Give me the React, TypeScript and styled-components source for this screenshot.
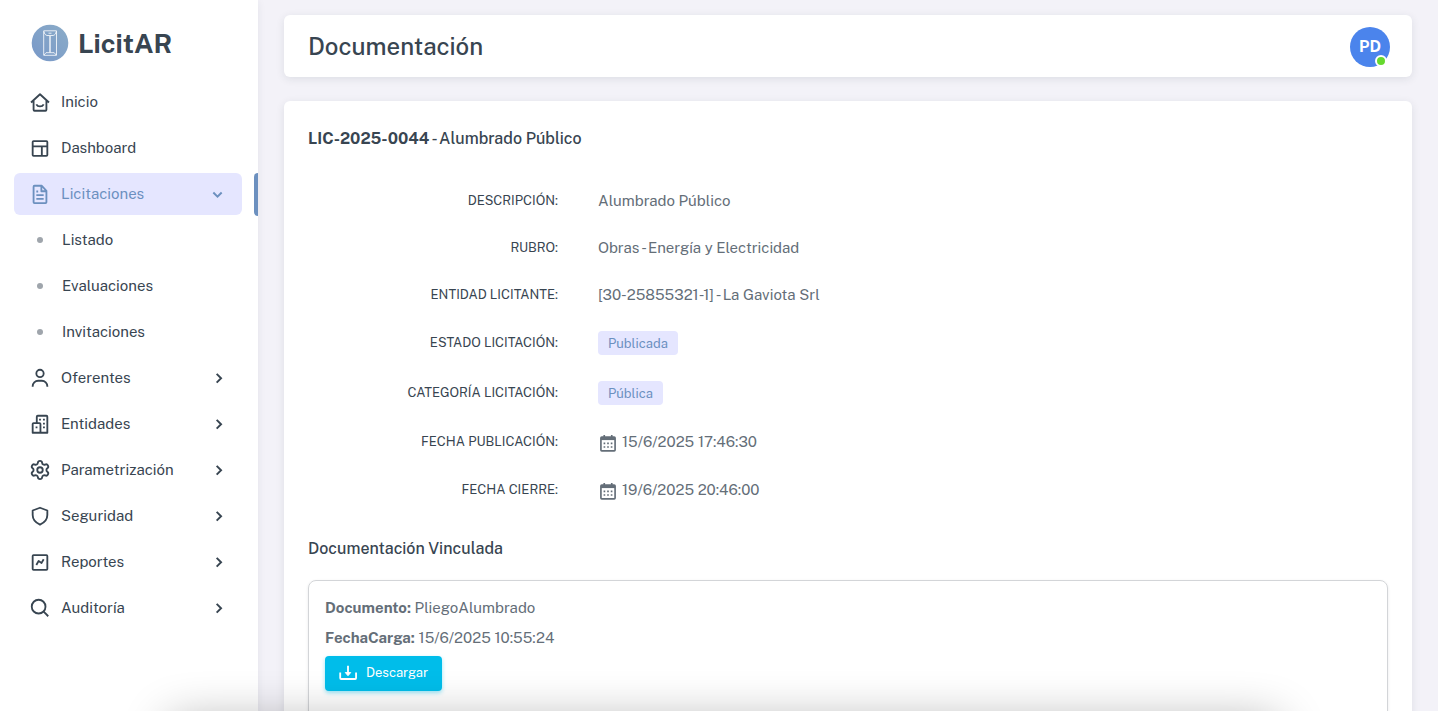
import React from "react";
import styled, { createGlobalStyle, css } from "styled-components";

const GlobalStyle = createGlobalStyle`
  *, *::before, *::after { box-sizing: border-box; }
  html { scrollbar-width: none; }
  body {
    margin: 0;
    background: #f3f2f8;
    color: #646e78;
    font-family: "Public Sans", Inter, "Liberation Sans", sans-serif;
    font-size: 15px;
    line-height: 22px;
  }
  h1, h2, h3, p, ul, dl, dd { margin: 0; padding: 0; }
  ul { list-style: none; }
`;

const Layout = styled.div`
  display: flex;
  height: 100vh;
  overflow: hidden;
`;

const Sidebar = styled.aside`
  flex: 0 0 258px;
  background: #fff;
  box-shadow: 0 2px 8px rgba(34, 48, 62, 0.08);
  overflow: hidden;
`;

const Brand = styled.a`
  display: flex;
  align-items: center;
  gap: 9px;
  height: 62px;
  margin: 12px 0 7px 31px;
  color: #384551;
  font-size: 27px;
  font-weight: 700;
  text-decoration: none;
`;

const Menu = styled.ul`
  display: flex;
  flex-direction: column;
  gap: 4px;
  padding: 0 16px 0 14px;
`;

const MenuItem = styled.li<{ $active?: boolean }>`
  position: relative;
  ${({ $active }) =>
    $active &&
    css`
      &::after {
        content: "";
        position: absolute;
        top: 0;
        right: -16px;
        width: 4px;
        height: 43px;
        border-radius: 4px 0 0 4px;
        background: #6c90bf;
      }
    `}
`;

const MenuLink = styled.a<{ $active?: boolean }>`
  display: flex;
  align-items: center;
  gap: 10px;
  height: 42px;
  padding: 0 13px 0 15px;
  border-radius: 6px;
  color: ${({ $active }) => ($active ? "#6c90bf" : "#384551")};
  background: ${({ $active }) => ($active ? "#e5e6ff" : "transparent")};
  text-decoration: none;
`;

const MenuLabel = styled.span`
  flex: 1;
`;

const Bullet = styled.span`
  width: 6px;
  height: 6px;
  margin: 0 9px 0 8px;
  border-radius: 50%;
  background: #9fa5ac;
`;

const Main = styled.main`
  flex: 1;
  min-width: 0;
  padding: 15px 26px 26px;
  overflow-y: auto;
  scrollbar-width: none;
`;

const Card = styled.section`
  border-radius: 6px;
  background: #fff;
  box-shadow: 0 2px 8px rgba(34, 48, 62, 0.1);
`;

const TopBar = styled(Card).attrs({ as: "header" })`
  display: flex;
  align-items: center;
  justify-content: space-between;
  height: 62px;
  margin-bottom: 24px;
  padding: 2px 22px 0 24px;
`;

const PageTitle = styled.h1`
  color: #384551;
  font-size: 24px;
  font-weight: 500;
  line-height: 34px;
  padding-bottom: 2px;
`;

const Avatar = styled.button`
  position: relative;
  width: 40px;
  height: 40px;
  padding: 0;
  border: 0;
  border-radius: 50%;
  background: #4b84ec;
  color: #fff;
  font: inherit;
  font-size: 16px;
  font-weight: 700;

  &::after {
    content: "";
    position: absolute;
    right: 3px;
    bottom: 0;
    width: 12px;
    height: 12px;
    border: 2px solid #fff;
    border-radius: 50%;
    background: #66d92e;
  }
`;

const DetailCard = styled(Card)`
  padding: 26px 24px 24px;
`;

const Heading = styled.h2`
  color: #384551;
  font-size: 16px;
  font-weight: 500;
  line-height: 24px;
`;

const Details = styled.dl`
  display: flex;
  flex-direction: column;
  gap: 24px;
  margin: 38px 0 35px;
`;

const DetailRow = styled.div<{ $height: number }>`
  display: grid;
  grid-template-columns: 250px 1fr;
  align-items: center;
  column-gap: 40px;
  min-height: ${({ $height }) => $height}px;
`;

const Term = styled.dt`
  color: #384551;
  font-size: 13px;
  line-height: 20px;
  text-align: right;
  text-transform: uppercase;
`;

const Value = styled.dd`
  display: flex;
  align-items: center;
  gap: 4px;
`;

const Badge = styled.span`
  padding: 3px 10px 1px;
  border-radius: 4px;
  background: #e5e6ff;
  color: #6c90bf;
  font-size: 13px;
  line-height: 20px;
`;

const DocumentBox = styled.article`
  margin-top: 19px;
  padding: 12px 16px;
  min-height: 160px;
  border: 1px solid #d3d5d8;
  border-radius: 8px;
  box-shadow: 0 1px 3px rgba(34, 48, 62, 0.1);
  line-height: 30px;
`;

const DownloadButton = styled.button`
  display: flex;
  align-items: center;
  gap: 7px;
  height: 35px;
  margin-top: 3px;
  padding: 0 14px 2px 12px;
  border: 0;
  border-radius: 4px;
  background: #00bdea;
  box-shadow: 0 2px 4px rgba(0, 189, 234, 0.4);
  color: #fff;
  font: inherit;
  font-size: 13px;
  line-height: 20px;
`;

const BottomShade = styled.div`
  position: fixed;
  right: 160px;
  bottom: -60px;
  left: 170px;
  height: 50px;
  pointer-events: none;
  box-shadow: 0 0 48px rgba(0, 0, 0, 0.32);
`;

const Glyph = styled.svg`
  flex: none;
  display: block;
  fill: none;
  stroke: currentColor;
  stroke-width: 2;
  stroke-linejoin: round;
`;

type IconName =
  | "home" | "layout" | "file" | "user" | "buildings" | "cog" | "shield"
  | "report" | "search" | "right" | "down" | "calendar" | "download";

const shapes: Record<IconName, React.ReactNode> = {
  home: (
    <>
      <path d="M2.200 12.500 12 3.500l9.800 9M5 10.500v10a1 1 0 0 0 1 1h12a1 1 0 0 0 1-1v-10" />
      <path d="M8 14.500c.8 1.600 2.200 2.300 4 2.300s3.200-.7 4-2.300" />
    </>
  ),
  layout: (
    <>
      <rect x="4" y="4.500" width="16" height="16" rx="1" />
      <path d="M4 10.200h16M14 10.200v10" />
    </>
  ),
  file: (
    <>
      <path d="M14 3H6a1 1 0 0 0-1 1v17a1 1 0 0 0 1 1h12a1 1 0 0 0 1-1V8.500zM13.500 3v6H19" />
      <path d="M8 9.300h2M8 13.300h8M8 17.300h8" />
    </>
  ),
  user: (
    <>
      <circle cx="12" cy="7" r="4" />
      <path d="M4 21.500v-.5a6 6 0 0 1 6-6h4a6 6 0 0 1 6 6v.5" />
    </>
  ),
  buildings: (
    <>
      <path d="M8.500 11V4a1 1 0 0 1 1-1H19a1 1 0 0 1 1 1v17.500H4V12a1 1 0 0 1 1-1h6.500a1 1 0 0 1 1 1v9.500" />
      <path d="M11 7.200h2M15.300 7.200h2M15.300 11.500h2M15.300 15.700h2M7.200 15.700h2" />
    </>
  ),
  cog: (
    <>
      <path d="M9.671 4.136a2.340 2.340 0 0 1 4.659 0 2.340 2.340 0 0 0 3.319 1.915 2.340 2.340 0 0 1 2.330 4.033 2.340 2.340 0 0 0 0 3.831 2.340 2.340 0 0 1-2.330 4.033 2.340 2.340 0 0 0-3.319 1.915 2.340 2.340 0 0 1-4.659 0 2.340 2.340 0 0 0-3.320-1.915 2.340 2.340 0 0 1-2.330-4.033 2.340 2.340 0 0 0 0-3.831A2.340 2.340 0 0 1 6.350 6.051a2.340 2.340 0 0 0 3.319-1.915" />
      <circle cx="12" cy="12" r="3" />
    </>
  ),
  shield: <path d="M12 3 4 6v5c0 5 3.500 8.500 8 10.500 4.500-2 8-5.500 8-10.500V6z" />,
  report: (
    <>
      <rect x="4" y="4.500" width="16" height="16" rx="1" />
      <path d="m8 15.200 2.500-4.200 3.200 2 2.300-4" />
    </>
  ),
  search: (
    <>
      <circle cx="10.500" cy="10.500" r="7.500" />
      <path d="m16 16 5 5" />
    </>
  ),
  right: <path d="m9.200 7 5.300 5.300-5.300 5.300" strokeWidth="2.300" strokeLinejoin="miter" />,
  down: <path d="m5.200 10.200 5 5 5-5" strokeWidth="2.300" strokeLinejoin="miter" />,
  calendar: (
    <>
      <path d="M4.500 6.200h15a1 1 0 0 1 1 1v14.400a1 1 0 0 1-1 1h-15a1 1 0 0 1-1-1V7.200a1 1 0 0 1 1-1zM7.500 3.500v3M16.500 3.500v3" />
      <path d="M3.500 8.200h17" strokeWidth="3" />
      <path d="M6.700 13.700h2M11 13.700h2M15.300 13.700h2M6.700 18h2M11 18h2M15.300 18h2" />
    </>
  ),
  download: (
    <>
      <path d="M12 4v8M3.500 11.500v6a1 1 0 0 0 1 1h15.300a1 1 0 0 0 1-1v-6" />
      <path d="M9 11.500h6l-3 3.500z" fill="currentColor" strokeWidth="1" />
    </>
  ),
};

const Icon = ({ name, size = 22 }: { name: IconName; size?: number }) => (
  <Glyph width={size} height={size} viewBox="0 0 24 24" aria-hidden="true">
    {shapes[name]}
  </Glyph>
);

const Logo = () => (
  <svg width="38" height="38" viewBox="0 0 38 38" aria-hidden="true">
    <defs>
      <linearGradient id="brand" x1="0" y1="1" x2="1" y2="0">
        <stop offset="0" stopColor="#7898c8" />
        <stop offset="1" stopColor="#8bacc8" />
      </linearGradient>
    </defs>
    <circle cx="19" cy="19" r="18.300" fill="url(#brand)" />
    <g fill="none" stroke="#fff" strokeOpacity="0.800">
      <path d="M12.700 6.800h12.800v24.500H12.700z" />
      <path d="M13 7.500c.3 2.500 1.500 3.500 3 4h6.200c1.500-.5 2.700-1.500 3-4M17.500 9.200h3" />
      <path d="M19 12v16.500" strokeWidth="1.600" />
      <path d="M13 31l2-2.300h8.200l2 2.300" />
    </g>
  </svg>
);

type Entry = { label: string; icon?: IconName; active?: boolean; arrow?: "right" | "down" };

const menu: Entry[] = [
  { label: "Inicio", icon: "home" },
  { label: "Dashboard", icon: "layout" },
  { label: "Licitaciones", icon: "file", active: true, arrow: "down" },
  { label: "Listado" },
  { label: "Evaluaciones" },
  { label: "Invitaciones" },
  { label: "Oferentes", icon: "user", arrow: "right" },
  { label: "Entidades", icon: "buildings", arrow: "right" },
  { label: "Parametrización", icon: "cog", arrow: "right" },
  { label: "Seguridad", icon: "shield", arrow: "right" },
  { label: "Reportes", icon: "report", arrow: "right" },
  { label: "Auditoría", icon: "search", arrow: "right" },
];

const details: { term: string; value: string; kind?: "badge" | "date" }[] = [
  { term: "Descripción:", value: "Alumbrado Público" },
  { term: "Rubro:", value: "Obras - Energía y Electricidad" },
  { term: "Entidad licitante:", value: "[30-25855321-1] - La Gaviota Srl" },
  { term: "Estado licitación:", value: "Publicada", kind: "badge" },
  { term: "Categoría licitación:", value: "Pública", kind: "badge" },
  { term: "Fecha publicación:", value: "15/6/2025 17:46:30", kind: "date" },
  { term: "Fecha cierre:", value: "19/6/2025 20:46:00", kind: "date" },
];

const rowHeight = { text: 23, badge: 26, date: 24 };

export default function App() {
  return (
    <>
      <GlobalStyle />
      <Layout>
        <Sidebar>
          <Brand href="#">
            <Logo />
            LicitAR
          </Brand>
          <nav aria-label="Principal">
            <Menu>
              {menu.map(({ label, icon, active, arrow }) => (
                <MenuItem key={label} $active={active}>
                  <MenuLink href="#" $active={active}>
                    {icon ? <Icon name={icon} /> : <Bullet />}
                    <MenuLabel>{label}</MenuLabel>
                    {arrow && <Icon name={arrow} size={20} />}
                  </MenuLink>
                </MenuItem>
              ))}
            </Menu>
          </nav>
        </Sidebar>
        <Main>
          <TopBar>
            <PageTitle>Documentación</PageTitle>
            <Avatar type="button">PD</Avatar>
          </TopBar>
          <DetailCard>
            <Heading>
              <strong>LIC-2025-0044</strong> - Alumbrado Público
            </Heading>
            <Details>
              {details.map(({ term, value, kind }) => (
                <DetailRow key={term} $height={rowHeight[kind ?? "text"]}>
                  <Term>{term}</Term>
                  <Value>
                    {kind === "date" && <Icon name="calendar" size={20} />}
                    {kind === "badge" ? <Badge>{value}</Badge> : <span>{value}</span>}
                  </Value>
                </DetailRow>
              ))}
            </Details>
            <Heading as="h3">Documentación Vinculada</Heading>
            <DocumentBox>
              <p><strong>Documento:</strong> PliegoAlumbrado</p>
              <p><strong>FechaCarga:</strong> 15/6/2025 10:55:24</p>
              <DownloadButton type="button">
                <Icon name="download" />
                Descargar
              </DownloadButton>
            </DocumentBox>
          </DetailCard>
        </Main>
      </Layout>
      <BottomShade />
    </>
  );
}
